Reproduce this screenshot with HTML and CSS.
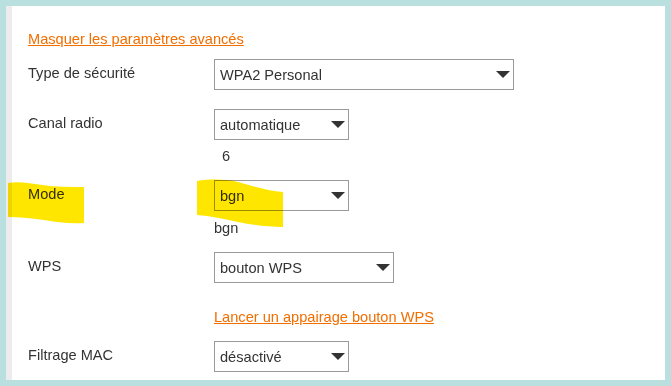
FILE: index.html
```html
<!DOCTYPE html>
<html lang="fr">
<head>
    <meta charset="UTF-8">
    <meta name="viewport" content="width=device-width, initial-scale=1.0">
    <title>Paramètres avancés</title>
    <link rel="stylesheet" href="styles.css">
</head>
<body>
    <div class="panel">
        <p class="toggle-row"><a class="link" href="#">Masquer les paramètres avancés</a></p>

        <div class="field field-first">
            <label for="security">Type de sécurité</label>
            <div class="control">
                <div class="select-wrap w300">
                    <select id="security">
                        <option>WPA2 Personal</option>
                    </select>
                </div>
            </div>
        </div>

        <div class="field field-channel">
            <label for="channel">Canal radio</label>
            <div class="control">
                <div class="select-wrap w135">
                    <select id="channel">
                        <option>automatique</option>
                    </select>
                </div>
                <p class="value value-indent">6</p>
            </div>
        </div>

        <div class="field">
            <label for="mode">Mode</label>
            <div class="control">
                <div class="select-wrap w135">
                    <select id="mode">
                        <option>bgn</option>
                    </select>
                </div>
                <p class="value value-mode">bgn</p>
            </div>
        </div>

        <div class="field">
            <label for="wps">WPS</label>
            <div class="control">
                <div class="select-wrap w180">
                    <select id="wps">
                        <option>bouton WPS</option>
                    </select>
                </div>
                <p class="action"><a class="link" href="#">Lancer un appairage bouton WPS</a></p>
            </div>
        </div>

        <div class="field">
            <label for="mac">Filtrage MAC</label>
            <div class="control">
                <div class="select-wrap w135">
                    <select id="mac">
                        <option>désactivé</option>
                    </select>
                </div>
            </div>
        </div>
    </div>

    <!-- surlignage jaune -->
    <svg class="marker" viewBox="0 0 671 386" width="671" height="386">
        <path d="M8,183 C18,181 30,183 42,185 C56,187 70,187 84,187 L84,223 C70,224 56,222 44,220 C30,218 18,217 8,217 Z"/>
        <path d="M197,181 C210,179 226,179 238,182 C252,186 268,191 283,192 L283,227 C268,227 252,225 238,222 C224,219 210,216 197,215 Z"/>
    </svg>
</body>
</html>
```

FILE: styles.css
```css
body {
    margin: 0;
    padding: 0;
    background-color: #b9dfdf;
    font-family: "Liberation Sans", Arial, sans-serif;
    font-size: 14.6px;
    line-height: 16px;
    color: #333;
}

.panel {
    box-sizing: border-box;
    height: 374px;
    margin: 6px 6px 0 6px;
    padding: 25px 0 0 16px;
    background: #fff;
    border-left: 6px solid #ececec;
    overflow: hidden;
}

.toggle-row {
    margin: 0;
}

.link {
    color: #f16e00;
    text-decoration: underline;
}

.field {
    display: grid;
    grid-template-columns: 186px auto;
    align-items: start;
    margin-top: 16px;
}

.field-first {
    margin-top: 12px;
}

.field-channel {
    margin-top: 19px;
}

.field label {
    padding-top: 6px;
}

.select-wrap {
    position: relative;
}

.select-wrap::after {
    content: '';
    position: absolute;
    right: 4px;
    top: 12px;
    border-left: 7px solid transparent;
    border-right: 7px solid transparent;
    border-top: 7px solid #333;
    pointer-events: none;
}

.w300 {
    width: 300px;
}

.w135 {
    width: 135px;
}

.w180 {
    width: 180px;
}

.select-wrap select {
    -webkit-appearance: none;
    appearance: none;
    box-sizing: border-box;
    display: block;
    width: 100%;
    height: 31px;
    margin: 0;
    padding: 0 5px;
    border: 1px solid #9a9a9a;
    border-radius: 0;
    background: #fff;
    font-family: "Liberation Sans", Arial, sans-serif;
    font-size: 14.6px;
    color: #333;
}

.value {
    margin: 0;
}

.value-indent {
    margin-top: 8px;
    padding-left: 8px;
}

.value-mode {
    margin-top: 9px;
}

.action {
    margin: 26px 0 0;
    white-space: nowrap;
}

.marker {
    position: absolute;
    top: 0;
    left: 0;
    pointer-events: none;
    mix-blend-mode: multiply;
    fill: #ffe600;
}
```
